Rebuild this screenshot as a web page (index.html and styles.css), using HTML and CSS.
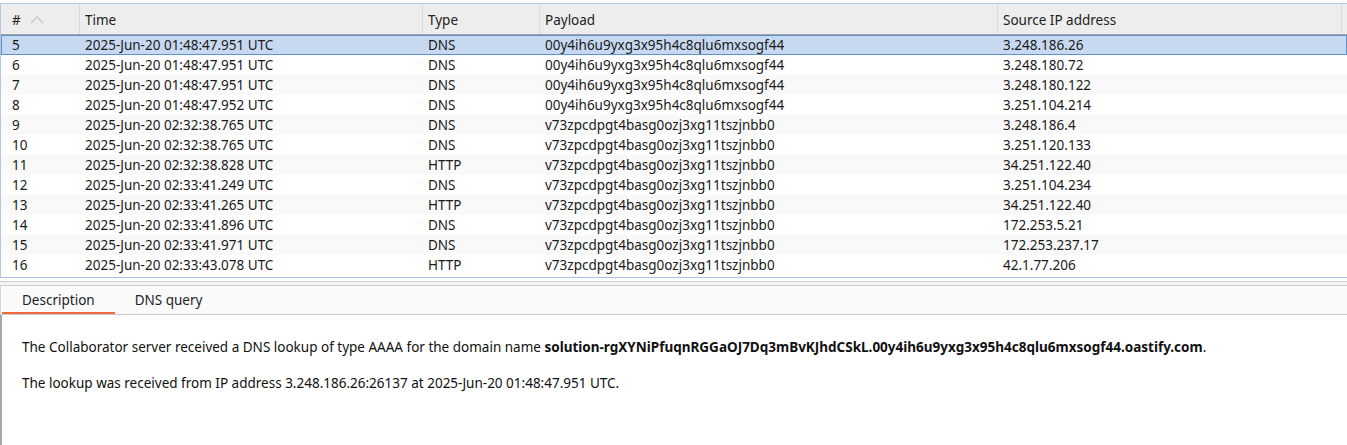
FILE: index.html
```html
<!DOCTYPE html>
<html>
<head>
<meta charset="utf-8">
<link rel="stylesheet" href="styles.css">
</head>
<body>
<div class="app">
  <div class="table">
    <div class="row head">
      <div class="cell c-num">#<span class="sort">
        <svg width="14" height="8" viewBox="0 0 14 8"><path d="M1 7 L7 1 L13 7" fill="none" stroke="#c4c4c4" stroke-width="1.2"/></svg></span></div>
      <div class="cell">Time</div>
      <div class="cell">Type</div>
      <div class="cell">Payload</div>
      <div class="cell">Source IP address</div>
      <div class="cell fill"></div>
    </div>
    <div class="body">
      <div class="row sel"><div class="cell c-num">5</div><div class="cell">2025-Jun-20 01:48:47.951 UTC</div><div class="cell">DNS</div><div class="cell">00y4ih6u9yxg3x95h4c8qlu6mxsogf44</div><div class="cell">3.248.186.26</div><div class="cell fill"></div></div>
      <div class="row"><div class="cell c-num">6</div><div class="cell">2025-Jun-20 01:48:47.951 UTC</div><div class="cell">DNS</div><div class="cell">00y4ih6u9yxg3x95h4c8qlu6mxsogf44</div><div class="cell">3.248.180.72</div><div class="cell fill"></div></div>
      <div class="row alt"><div class="cell c-num">7</div><div class="cell">2025-Jun-20 01:48:47.951 UTC</div><div class="cell">DNS</div><div class="cell">00y4ih6u9yxg3x95h4c8qlu6mxsogf44</div><div class="cell">3.248.180.122</div><div class="cell fill"></div></div>
      <div class="row"><div class="cell c-num">8</div><div class="cell">2025-Jun-20 01:48:47.952 UTC</div><div class="cell">DNS</div><div class="cell">00y4ih6u9yxg3x95h4c8qlu6mxsogf44</div><div class="cell">3.251.104.214</div><div class="cell fill"></div></div>
      <div class="row alt"><div class="cell c-num">9</div><div class="cell">2025-Jun-20 02:32:38.765 UTC</div><div class="cell">DNS</div><div class="cell">v73zpcdpgt4basg0ozj3xg11tszjnbb0</div><div class="cell">3.248.186.4</div><div class="cell fill"></div></div>
      <div class="row"><div class="cell c-num">10</div><div class="cell">2025-Jun-20 02:32:38.765 UTC</div><div class="cell">DNS</div><div class="cell">v73zpcdpgt4basg0ozj3xg11tszjnbb0</div><div class="cell">3.251.120.133</div><div class="cell fill"></div></div>
      <div class="row alt"><div class="cell c-num">11</div><div class="cell">2025-Jun-20 02:32:38.828 UTC</div><div class="cell">HTTP</div><div class="cell">v73zpcdpgt4basg0ozj3xg11tszjnbb0</div><div class="cell">34.251.122.40</div><div class="cell fill"></div></div>
      <div class="row"><div class="cell c-num">12</div><div class="cell">2025-Jun-20 02:33:41.249 UTC</div><div class="cell">DNS</div><div class="cell">v73zpcdpgt4basg0ozj3xg11tszjnbb0</div><div class="cell">3.251.104.234</div><div class="cell fill"></div></div>
      <div class="row alt"><div class="cell c-num">13</div><div class="cell">2025-Jun-20 02:33:41.265 UTC</div><div class="cell">HTTP</div><div class="cell">v73zpcdpgt4basg0ozj3xg11tszjnbb0</div><div class="cell">34.251.122.40</div><div class="cell fill"></div></div>
      <div class="row"><div class="cell c-num">14</div><div class="cell">2025-Jun-20 02:33:41.896 UTC</div><div class="cell">DNS</div><div class="cell">v73zpcdpgt4basg0ozj3xg11tszjnbb0</div><div class="cell">172.253.5.21</div><div class="cell fill"></div></div>
      <div class="row alt"><div class="cell c-num">15</div><div class="cell">2025-Jun-20 02:33:41.971 UTC</div><div class="cell">DNS</div><div class="cell">v73zpcdpgt4basg0ozj3xg11tszjnbb0</div><div class="cell">172.253.237.17</div><div class="cell fill"></div></div>
      <div class="row"><div class="cell c-num">16</div><div class="cell">2025-Jun-20 02:33:43.078 UTC</div><div class="cell">HTTP</div><div class="cell">v73zpcdpgt4basg0ozj3xg11tszjnbb0</div><div class="cell">42.1.77.206</div><div class="cell fill"></div></div>
    </div>
  </div>
  <div class="splitter"></div>
  <div class="tabs">
    <div class="tab active">Description</div>
    <div class="tab">DNS query</div>
  </div>
  <div class="content">
    <p>The Collaborator server received a DNS lookup of type AAAA for the domain name <b>solution-rgXYNiPfuqnRGGaOJ7Dq3mBvKJhdCSkL.00y4ih6u9yxg3x95h4c8qlu6mxsogf44.oastify.com</b>.</p>
    <p>The lookup was received from IP address 3.248.186.26:26137 at 2025-Jun-20 01:48:47.951 UTC.</p>
  </div>
</div>
</body>
</html>
```

FILE: styles.css
```css
html, body {
  margin: 0;
  padding: 0;
  background: #ffffff;
}
body {
  font-family: "Noto Sans", "Open Sans", sans-serif;
  font-size: 13.5px;
  color: #1a1a1a;
  width: 1347px;
  height: 445px;
  overflow: hidden;
}
.app {
  display: flex;
  flex-direction: column;
  padding-top: 3px;
}
.table {
  border-top: 1px solid #b3c9e3;
  border-left: 1px solid #b3c9e3;
  border-bottom: 1px solid #a9c3e2;
  height: 275px;
  box-sizing: border-box;
}
.row {
  display: grid;
  grid-template-columns: 79px 343px 117px 458px 344px 1fr;
  height: 20px;
  align-items: center;
  background: #ffffff;
}
.row.alt {
  background: #f9f9f9;
}
.row.head {
  height: 30px;
  background: #ededed;
  border-bottom: 1px solid #a3a3a3;
  color: #222;
}
.head .cell {
  height: 100%;
  display: flex;
  align-items: center;
  padding-top: 1px;
  border-right: 1px solid #dadada;
  box-sizing: border-box;
}
.head .cell.fill {
  border-right: none;
}
.cell {
  padding-left: 5px;
  white-space: nowrap;
  overflow: hidden;
}
.cell.c-num {
  padding-left: 11px;
}
.sort {
  margin-left: 9px;
  display: inline-flex;
  align-items: center;
}
.row.sel {
  background: #c6d9f0;
  box-shadow: inset 0 0 0 1px #5f91cc;
}
.splitter {
  height: 5px;
  box-sizing: border-box;
  margin-top: 3px;
  border-top: 1px solid #cfcfcf;
  border-bottom: 1px solid #cfcfcf;
  background: #f4f4f4;
}
.tabs {
  display: flex;
  height: 29px;
  box-sizing: border-box;
  background: #fafafa;
  border-left: 1px solid #d8d8d8;
  border-bottom: 1px solid #c9c9c9;
  padding-left: 1px;
}
.tab {
  display: flex;
  align-items: center;
  padding: 0 20px 0 20px;
  color: #222;
  box-sizing: border-box;
  height: 100%;
}
.tab.active {
  border-bottom: 2px solid #f26a3b;
  padding-top: 2px;
}
.content {
  flex: none;
  height: 130px;
  box-sizing: border-box;
  border-left: 2px solid #a8a8a8;
  padding: 23px 0 0 20px;
  color: #111;
}
.content p {
  margin: 0 0 18px 0;
  line-height: 18px;
}
.content b {
  font-weight: 700;
}
```
